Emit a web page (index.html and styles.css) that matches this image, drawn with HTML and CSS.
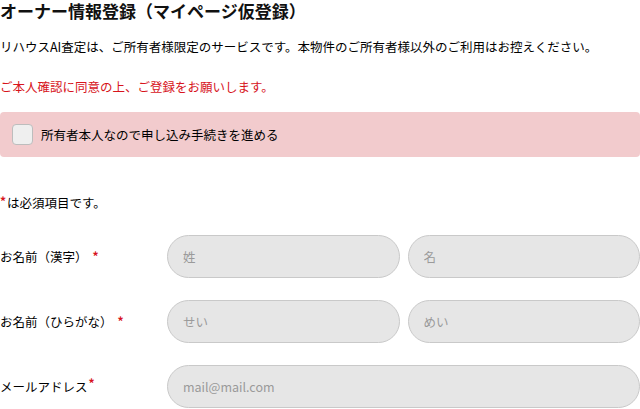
FILE: index.html
```html
<!DOCTYPE html>
<html lang="ja">
<head>
<meta charset="utf-8">
<title>オーナー情報登録</title>
<link rel="stylesheet" href="styles.css">
</head>
<body>
<main class="page">
  <h1 class="title">オーナー情報登録（マイページ仮登録）</h1>
  <p class="lead">リハウスAI査定は、ご所有者様限定のサービスです。本物件のご所有者様以外のご利用はお控えください。</p>
  <p class="alert">ご本人確認に同意の上、ご登録をお願いします。</p>
  <label class="agree">
    <span class="check"></span>
    <span class="agree-text">所有者本人なので申し込み手続きを進める</span>
  </label>
  <p class="note"><span class="req req-tight">*</span>は必須項目です。</p>
  <div class="form">
    <div class="row">
      <div class="label">お名前（漢字）<span class="req req-space">*</span></div>
      <div class="fields">
        <input class="field" type="text" placeholder="姓">
        <input class="field" type="text" placeholder="名">
      </div>
    </div>
    <div class="row">
      <div class="label">お名前（ひらがな）<span class="req req-space">*</span></div>
      <div class="fields">
        <input class="field" type="text" placeholder="せい">
        <input class="field" type="text" placeholder="めい">
      </div>
    </div>
    <div class="row">
      <div class="label">メールアドレス<span class="req req-sup">*</span></div>
      <div class="fields">
        <input class="field" type="text" placeholder="mail@mail.com">
      </div>
    </div>
  </div>
</main>
</body>
</html>
```

FILE: styles.css
```css
html, body {
  margin: 0;
  padding: 0;
  background: #fff;
}
body {
  font-family: "Noto Sans CJK JP", "Noto Sans", sans-serif;
  color: #000;
  font-size: 12.5px;
  width: 640px;
  overflow: hidden;
}
.page {
  display: flex;
  flex-direction: column;
}
.title {
  margin: 0;
  font-size: 17px;
  line-height: 22px;
  font-weight: 700;
  color: #111;
}
.lead {
  margin: 15px 0 0;
  line-height: 20px;
  white-space: nowrap;
}
.alert {
  margin: 20px 0 0;
  line-height: 20px;
  color: #d7141c;
}
.agree {
  margin-top: 15px;
  height: 45px;
  background: #f2cbcd;
  border-radius: 4px;
  display: flex;
  align-items: center;
  padding-left: 12px;
  box-sizing: border-box;
}
.check {
  width: 21px;
  height: 21px;
  box-sizing: border-box;
  border: 1px solid #bdbdbd;
  border-radius: 4px;
  background: #efefef;
  flex: none;
}
.agree-text {
  margin-left: 8px;
}
.note {
  margin: 36px 0 0;
  line-height: 20px;
}
.req {
  color: #d7141c;
  font-size: 12px;
  font-weight: 700;
}
.req-tight {
  position: relative;
  top: -2px;
  margin-right: 1px;
}
.req-space {
  margin-left: 5px;
  position: relative;
  top: -1px;
}
.req-sup {
  position: relative;
  top: -4px;
  margin-left: 1px;
}
.form {
  margin-top: 22px;
  display: flex;
  flex-direction: column;
  gap: 22px;
}
.row {
  display: flex;
  align-items: center;
}
.label {
  width: 167px;
  flex: none;
  white-space: nowrap;
}
.fields {
  flex: 1;
  display: flex;
  gap: 8px;
}
.field {
  flex: 1;
  min-width: 0;
  height: 43px;
  box-sizing: border-box;
  border: 1.5px solid #c9c9c9;
  border-radius: 22px;
  background: #e6e6e6;
  padding: 0 15px;
  font-family: "Noto Sans CJK JP", "Noto Sans", sans-serif;
  font-size: 12.5px;
  color: #333;
  outline: none;
}
.field::placeholder {
  color: #9a9a9a;
}
```
